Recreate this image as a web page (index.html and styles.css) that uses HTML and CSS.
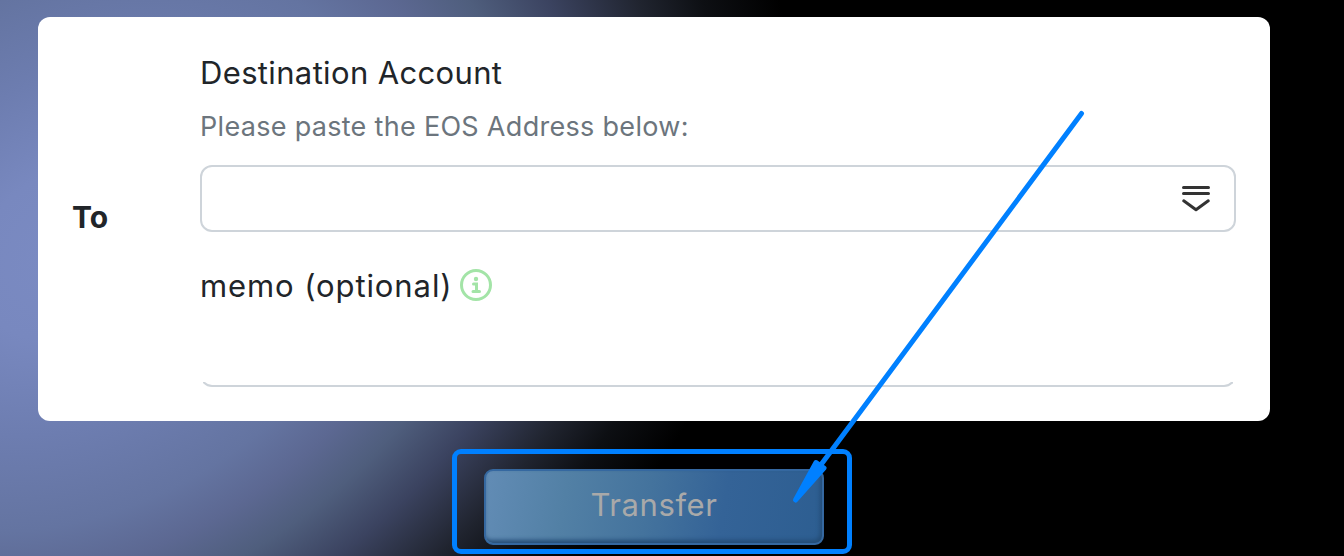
FILE: index.html
```html
<!DOCTYPE html>
<html lang="en">
<head>
<meta charset="utf-8">
<title>Transfer</title>
<link rel="stylesheet" href="styles.css">
</head>
<body>
<main class="page">
  <section class="card">
    <div class="side"><strong>To</strong></div>
    <div class="fields">
      <h1 class="label"><span>Destination Account</span></h1>
      <p class="hint"><span>Please paste the EOS Address below:</span></p>
      <div class="input">
        <svg class="picker" width="30" height="28" viewBox="0 0 30 28" fill="none" stroke="#333" stroke-width="3" stroke-linecap="round" stroke-linejoin="round"><path d="M2.500 2.500h25M2.500 8.500h25"/><path d="M2.700 15.800 15 24.700l12.300-8.900"/></svg>
      </div>
      <div class="memo">
        <span class="memo-text">memo (optional)</span>
        <svg width="32" height="32" viewBox="0 0 32 32"><circle cx="16" cy="16" r="14.500" fill="none" stroke="#a3e4a7" stroke-width="3"/><circle cx="16" cy="10" r="2.200" fill="#a3e4a7"/><path d="M13.500 15h3v7.500M13 22.500h6.500" fill="none" stroke="#a3e4a7" stroke-width="3" stroke-linecap="round"/></svg>
      </div>
      <div class="memo-input"></div>
    </div>
  </section>
  <div class="actions">
    <div class="highlight"><button class="transfer"><span>Transfer</span></button></div>
  </div>
  <svg class="arrow" width="1344" height="556" viewBox="0 0 1344 556" fill="#0080ff" stroke="#0080ff" stroke-linecap="round" stroke-linejoin="round"><path d="M1081.500 113.500 820 466" stroke-width="5"/><path d="M795.500 500 816 462.500 824 468Z" stroke-width="5"/></svg>
</main>
</body>
</html>
```
FILE: styles.css
```css
* { box-sizing: border-box; }
body { margin: 0; font-family: Inter, Lato, sans-serif; color: #212529; }
.page {
  position: relative;
  z-index: 0;
  height: 556px;
  padding: 17px 74px 0 38px;
  overflow: hidden;
  background: #000;
}
/* tilted glow behind the card */
.page::before {
  content: "";
  position: absolute;
  z-index: -1;
  left: -700px;
  top: -330px;
  width: 1552px;
  height: 1160px;
  transform: rotate(-32deg);
  background: radial-gradient(closest-side, #7b8bc3 0%, #7888bf 14%, #6d7db0 29%, #6474a1 44%, #5c6892 52%, #4f5e7d 60%, #3b4360 69%, #20242f 80%, #0d0f13 88%, #000 98%);
}
.card {
  display: flex;
  height: 404px;
  padding: 0 34px;
  border-radius: 12px;
  background: #fff;
}
.side { width: 128px; padding-top: 178px; line-height: 44px; }
.side strong { font-weight: 700; font-size: 30px; }
.fields { flex: 1; padding-top: 36px; }
.label { margin: 0; font-size: 31px; line-height: 40px; font-weight: 400; letter-spacing: .35px; }
.hint { margin: 14px 0 18px; font-size: 27px; line-height: 40px; color: #6c757d; letter-spacing: .3px; }
.input {
  display: flex;
  align-items: center;
  justify-content: flex-end;
  height: 67px;
  padding-right: 23px;
  border: 2px solid #ced4da;
  border-radius: 12px;
}
.memo { display: flex; align-items: center; height: 40px; margin-top: 33px; font-size: 31px; }
.memo-text { width: 260px; white-space: nowrap; letter-spacing: .9px; }
.memo-input { height: 12px; margin-top: 70px; border: solid #ced4da; border-width: 0 2px 2px; border-radius: 0 0 12px 12px; clip-path: inset(7px 3px 0); }
.actions { display: flex; padding: 28px 0 0 414px; }
.highlight { width: 400px; height: 105px; padding: 15px 27px; border: 5px solid #0080ff; border-radius: 9px; }
.transfer {
  display: block;
  width: 340px;
  height: 76px;
  padding: 0 0 5px;
  border: 2px solid #3568a0;
  border-radius: 9px;
  background: linear-gradient(100deg, #628cb5, #5280a5 24%, #44739d 48%, #346397 70%, #2d5e91);
  box-shadow: inset -2px -3px 4px #244d77;
  color: #a9a9a9;
  font: 400 31px Inter, sans-serif;
  letter-spacing: .6px;
}
.arrow { position: absolute; top: 0; left: 0; pointer-events: none; }
```
